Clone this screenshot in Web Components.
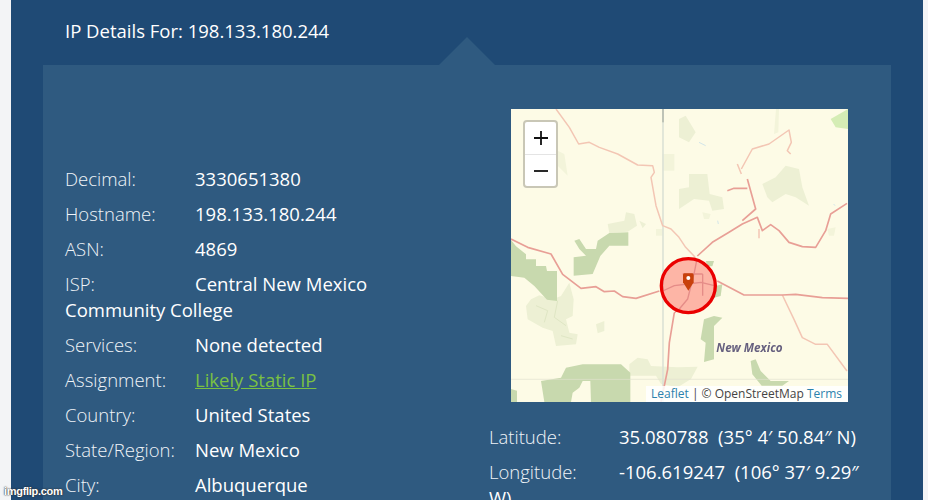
<!DOCTYPE html>
<html>
<head>
<meta charset="utf-8">
<title>IP Details</title>
<style>
  html, body { margin: 0; padding: 0; height: 500px; overflow: hidden; background: #f3f4f6; }
  body { font-family: "Open Sans", "Liberation Sans", sans-serif; }
</style>
</head>
<body>

<ip-details ip="198.133.180.244">
  <info-row label="Decimal:">3330651380</info-row>
  <info-row label="Hostname:">198.133.180.244</info-row>
  <info-row label="ASN:">4869</info-row>
  <info-row label="ISP:">Central New Mexico Community College</info-row>
  <info-row label="Services:">None detected</info-row>
  <info-row label="Assignment:"><a href="#">Likely Static IP</a></info-row>
  <info-row label="Country:">United States</info-row>
  <info-row label="State/Region:">New Mexico</info-row>
  <info-row label="City:">Albuquerque</info-row>

  <leaflet-map slot="side"></leaflet-map>
  <info-row slot="side" label="Latitude:">35.080788&nbsp; (35° 4′ 50.84″ N)</info-row>
  <info-row slot="side" label="Longitude:">-106.619247&nbsp; (106° 37′ 9.29″ W)</info-row>
</ip-details>

<img-flip></img-flip>

<script>
class ipDetails extends HTMLElement {
  constructor() {
    super();
    this.shadowDOM = this.attachShadow({mode: 'open'});
  }

  connectedCallback() {
    this.shadowDOM.innerHTML = `
      <style>
        * { box-sizing: border-box; }
        :host {
          display: block;
          box-sizing: border-box;
          margin-left: 11px;
          width: 912px;
          height: 500px;
          padding: 0 32px;
          overflow: hidden;
          background: #1f4a75;
          color: #fff;
          font-size: 18.5px;
          line-height: 26px;
        }
        h2 {
          margin: 0;
          padding: 18px 22px 21px;
          font-size: 18.5px;
          line-height: 26px;
          font-weight: 400;
        }
        .panel {
          position: relative;
          display: grid;
          grid-template-columns: 380px 380px;
          column-gap: 44px;
          padding: 44px 22px 0;
          height: 435px;
          background: #2f5a80;
        }
        .panel::before {
          content: "";
          position: absolute;
          left: 396px;
          top: -28px;
          border: solid transparent;
          border-width: 0 28px 28px;
          border-bottom-color: #2f5a80;
        }
        .main { padding-top: 56.6px; }
      </style>
      <h2>IP Details For: ${this.getAttribute('ip')}</h2>
      <div class="panel">
        <div class="main"><slot></slot></div>
        <div class="side"><slot name="side"></slot></div>
      </div>
    `;
  }
}

class infoRow extends HTMLElement {
  constructor() {
    super();
    this.shadowDOM = this.attachShadow({mode: 'open'});
  }

  connectedCallback() {
    this.shadowDOM.innerHTML = `
      <style>
        :host { display: block; margin-bottom: 9.1px; }
        .label { display: inline-block; width: 130px; font-weight: 300; color: #f0f4f8; }
        ::slotted(a) { color: #7ac143; text-decoration: underline; }
      </style>
      <span class="label">${this.getAttribute('label')}</span><slot></slot>
    `;
  }
}

class leafletMap extends HTMLElement {
  constructor() {
    super();
    this.shadowDOM = this.attachShadow({mode: 'open'});
  }

  connectedCallback() {
    // viewBox is the map at 3x, paths were read off zoomed crops
    this.shadowDOM.innerHTML = `
      <style>
        * { box-sizing: border-box; }
        :host {
          display: block;
          position: relative;
          width: 337px;
          height: 293px;
          margin: 0 0 22px 22px;
          overflow: hidden;
          background: #fdfbe6;
          font-family: "Open Sans", "Liberation Sans", sans-serif;
        }
        .tiles { display: block; width: 337px; height: 293px; filter: blur(.45px); }
        .zoom {
          position: absolute;
          left: 12px;
          top: 11px;
          width: 35px;
          border: 2px solid #c9c7b6;
          border-radius: 4px;
          background: #fff;
        }
        .zoom div {
          display: flex;
          align-items: center;
          justify-content: center;
          height: 32px;
        }
        .zoom div + div { border-top: 1px solid #e4e4e4; }
        .zoom svg { display: block; width: 14px; height: 14px; }
        .attr {
          position: absolute;
          right: 0;
          bottom: 0;
          padding: 0 6px 0 5px;
          background: rgba(255,255,255,.85);
          font-size: 12px;
          line-height: 16px;
          color: #444;
          white-space: nowrap;
        }
        .attr a { color: #2b82ad; text-decoration: none; }
      </style>
      <svg class="tiles" viewBox="0 0 1011 879">
        <rect width="1011" height="879" fill="#fdfbe6"/>
        <g fill="#f3f4da">
          <path d="M140 125 160 135 170 200 140 170Z"/>
          <path d="M455 135 490 135 490 185 455 185Z"/>
          <path d="M435 360 455 360 455 380 435 380Z"/>
          <path d="M795 0 804 0 802 70 789 75Z"/>
          <path d="M949 360 974 355 969 380 954 380Z"/>
          <path d="M574 310 599 315 594 330 579 330Z"/>
        </g>
        <g fill="#edf0d4">
          <path d="M290 345 340 335 345 310 370 315 378 350 350 368 295 372Z"/>
          <path d="M385 335 405 345 395 358Z"/>
          <path d="M504 30 524 20 554 70 534 100 504 85Z"/>
          <path d="M534 195 589 195 596 255 634 265 639 300 604 305 594 275 549 270 504 300 504 240 534 235Z"/>
          <path d="M754 225 794 205 824 170 864 180 874 235 894 290 854 265 824 255 784 280 769 265Z"/>
          <path d="M355 766 380 746 410 751 420 771 500 775 560 773 540 810 500 835 450 825 435 800 355 800Z"/>
          <path d="M255 646 280 636 280 666 260 673Z"/>
          <path d="M45 591 60 571 85 559 125 571 150 561 175 521 188 571 185 621 165 631 175 671 200 676 195 706 135 711 125 666 95 656 50 631Z"/>
        </g>
        <g fill="none" stroke="#dfe6c4" stroke-width="3">
          <path d="M75 590 110 605 100 640M140 575 130 625 165 650M150 680 185 690"/>
        </g>
        <path d="M959 30 1011 0 1011 60 974 55Z" fill="#d5edb5"/>
        <g fill="#c8d9ae">
          <path d="M190 395 205 390 225 420 255 420 260 395 295 372 352 370 352 410 295 410 268 441 245 495 188 500 188 445 225 440 205 420Z"/>
          <path d="M0 393 15 412 45 436 45 451 75 451 75 471 105 471 108 486 138 486 138 576 108 572 70 531 40 506 0 501Z"/>
          <path d="M90 816 150 806 165 776 215 766 330 766 358 791 358 879 240 879 238 816 215 816 205 836 185 851 180 879 100 879Z"/>
          <path d="M0 840 18 845 18 879 0 879Z"/>
          <path d="M579 631 609 621 634 626 609 651 609 751 579 759 584 701 569 691Z"/>
          <path d="M719 756 734 751 749 786 779 816 834 816 814 830 752 830 724 796Z"/>
          <path d="M584 456 609 456 604 472 590 472Z"/>
          <path d="M614 531 634 526 629 561 609 566Z"/>
        </g>
        <g fill="none" stroke="#d3e6ea" stroke-width="3">
          <path d="M564 100 584 110"/>
          <path d="M620 335 622 345"/>
          <path d="M968 285 972 290"/>
        </g>
        <path d="M456 0V879" stroke="#dde2d6" stroke-width="5" fill="none"/>
        <path d="M456 0V40" stroke="#9aa095" stroke-width="3" fill="none"/>
        <path d="M0 811H1011" stroke="#e2e2d0" stroke-width="2" fill="none"/>
        <g fill="none" stroke="#f3c6b4" stroke-width="4.5" stroke-linejoin="round">
          <path d="M135 0 175 55 203 105 235 100 265 115 320 135 380 168 425 170 430 190 420 205 435 290 455 350 480 360 504 385 524 415 549 441 555 450"/>
          <path d="M814 558 849 631 874 686 914 706 949 706 1008 786"/>
          <path d="M679 165 691 195M691 180 724 120 774 105 834 63 841 100 829 125 839 135"/>
          <path d="M744 360 744 388"/>
        </g>
        <g fill="none" stroke="#e89f96" stroke-width="5" stroke-linejoin="round">
          <path d="M0 390 50 415 120 435 155 496 210 538 255 533 280 548 310 546 335 563 375 568 445 546"/>
          <path d="M559 441 604 400 654 370 694 345 739 325 754 365 779 347 804 365 834 400 874 413 914 415 944 365 959 315 1008 283"/>
          <path d="M619 516 699 558 814 558 854 556 934 566 1011 568"/>
          <path d="M490 611 475 701 470 781 450 879"/>
          <path d="M694 335 734 300 709 210"/>
          <path d="M649 245 669 238 709 238"/>
        </g>
        <circle cx="532" cy="530" r="81" fill="#ff0000" fill-opacity=".28"/>
        <g fill="none" stroke="#e58c88" stroke-width="4" stroke-linejoin="round">
          <path d="M455 546 490 530 530 525 570 520 610 530"/>
          <path d="M558 450 550 490 530 570 505 600 490 611"/>
          <path d="M515 495H575M575 495V560"/>
        </g>
        <circle cx="532" cy="530" r="81" fill="none" stroke="#ea0000" stroke-width="10"/>
        <path d="M520 493H544Q548 493 548 498V520L532 545 516 520V498Q516 493 520 493Z" fill="#c8410c"/>
        <circle cx="532" cy="507" r="6" fill="#fff"/>
        <text x="616" y="728" font-family="'Open Sans', sans-serif" font-size="35" font-weight="700" font-style="italic" fill="#66607f" stroke="#fdfbe6" stroke-width="1" paint-order="stroke">New Mexico</text>
      </svg>
      <div class="zoom">
        <div><svg viewBox="0 0 14 14"><path d="M7 0V14M0 7H14" stroke="#111" stroke-width="1.8"/></svg></div>
        <div><svg viewBox="0 0 14 14"><path d="M0 7H14" stroke="#111" stroke-width="1.8"/></svg></div>
      </div>
      <div class="attr"><a href="#">Leaflet</a> | © OpenStreetMap <a href="#">Terms</a></div>
    `;
  }
}

class imgFlip extends HTMLElement {
  constructor() {
    super();
    this.shadowDOM = this.attachShadow({mode: 'open'});
  }

  connectedCallback() {
    this.shadowDOM.innerHTML = `
      <style>
        :host {
          position: absolute;
          left: 4px;
          top: 484px;
          font: bold 11px/14px "Liberation Sans", sans-serif;
          letter-spacing: -.3px;
          color: #fff;
          text-shadow: 0 0 2px #333, 0 0 1px #333;
        }
      </style>
      imgflip.com
    `;
  }
}

customElements.define('ip-details', ipDetails);
customElements.define('info-row', infoRow);
customElements.define('leaflet-map', leafletMap);
customElements.define('img-flip', imgFlip);
</script>
</body>
</html>
